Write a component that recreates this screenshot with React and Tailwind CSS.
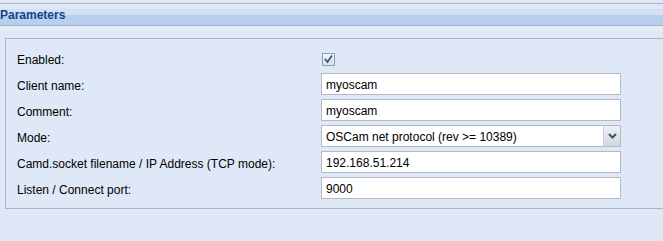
import React from 'react';

const rows = [
  { label: 'Client name:', value: 'myoscam' },
  { label: 'Comment:', value: 'myoscam' },
  { label: 'Mode:', value: 'OSCam net protocol (rev >= 10389)', select: true },
  { label: 'Camd.socket filename / IP Address (TCP mode):', value: '192.168.51.214' },
  { label: 'Listen / Connect port:', value: '9000' },
];

function Checkbox() {
  return (
    <div className="w-[13px] h-[13px] border border-[#8e9db0] bg-gradient-to-b from-[#f4f6f9] to-[#d9e0e8] flex items-center justify-center">
      <svg width="9" height="9" viewBox="0 0 9 9">
        <path d="M1.5 4.5 L3.5 7 L7.5 1.2" fill="none" stroke="#2f5a9a" strokeWidth="1.8" strokeLinecap="square" />
      </svg>
    </div>
  );
}

function Field({ value, select }) {
  return (
    <div className="w-[300px] h-[22px] border border-[#b5b8c8] bg-white flex items-center">
      <span className="flex-1 pl-[4px] pt-[1px] text-[12px] text-black leading-none whitespace-nowrap">{value}</span>
      {select && (
        <div className="w-[17px] h-full border-l border-[#c8cdd6] bg-gradient-to-b from-[#eef0f3] to-[#d2d8e0] flex items-center justify-center">
          <svg width="9" height="6" viewBox="0 0 9 6">
            <path d="M1 1 L4.5 4.5 L8 1" fill="none" stroke="#3f5270" strokeWidth="2" />
          </svg>
        </div>
      )}
    </div>
  );
}

export default function App() {
  return (
    <div className="w-[663px] h-[241px] bg-[#dfe8f6] overflow-hidden font-['Liberation_Sans',Arial,sans-serif]">
      <div className="h-[3px]" />
      <div className="h-[23px] border-t border-b border-t-[#a9b5c2] border-b-[#9ab0d6] bg-[linear-gradient(to_bottom,#dfe8f6_0px,#dfe8f6_5px,#d3e0f2_5px,#d3e0f2_11px,#b9d0ec_11px,#b9d0ec_100%)] flex items-center">
        <span className="text-[12px] font-bold text-[#15428b] leading-none">Parameters</span>
      </div>
      <div className="h-[12px] bg-[linear-gradient(to_bottom,#e5edf9_0px,#e5edf9_5px,#dfe8f6_5px)]" />
      <div className="ml-[5px] h-[171px] border-l border-t border-b border-[#aab4c1] pt-[10px] pl-[11px]">
        <div className="flex flex-col gap-[4px]">
          <div className="flex h-[20px] text-[12px] text-[#000]">
            <div className="w-[304px] pt-[5px] leading-none">Enabled:</div>
            <div className="pt-[4px] pl-[1px]"><Checkbox /></div>
          </div>
          {rows.map((r) => (
            <div key={r.label} className="flex h-[22px] items-center text-[12px] text-black">
              <div className="w-[304px] pt-[3px] leading-none whitespace-nowrap">{r.label}</div>
              <Field value={r.value} select={r.select} />
            </div>
          ))}
        </div>
      </div>
    </div>
  );
}
